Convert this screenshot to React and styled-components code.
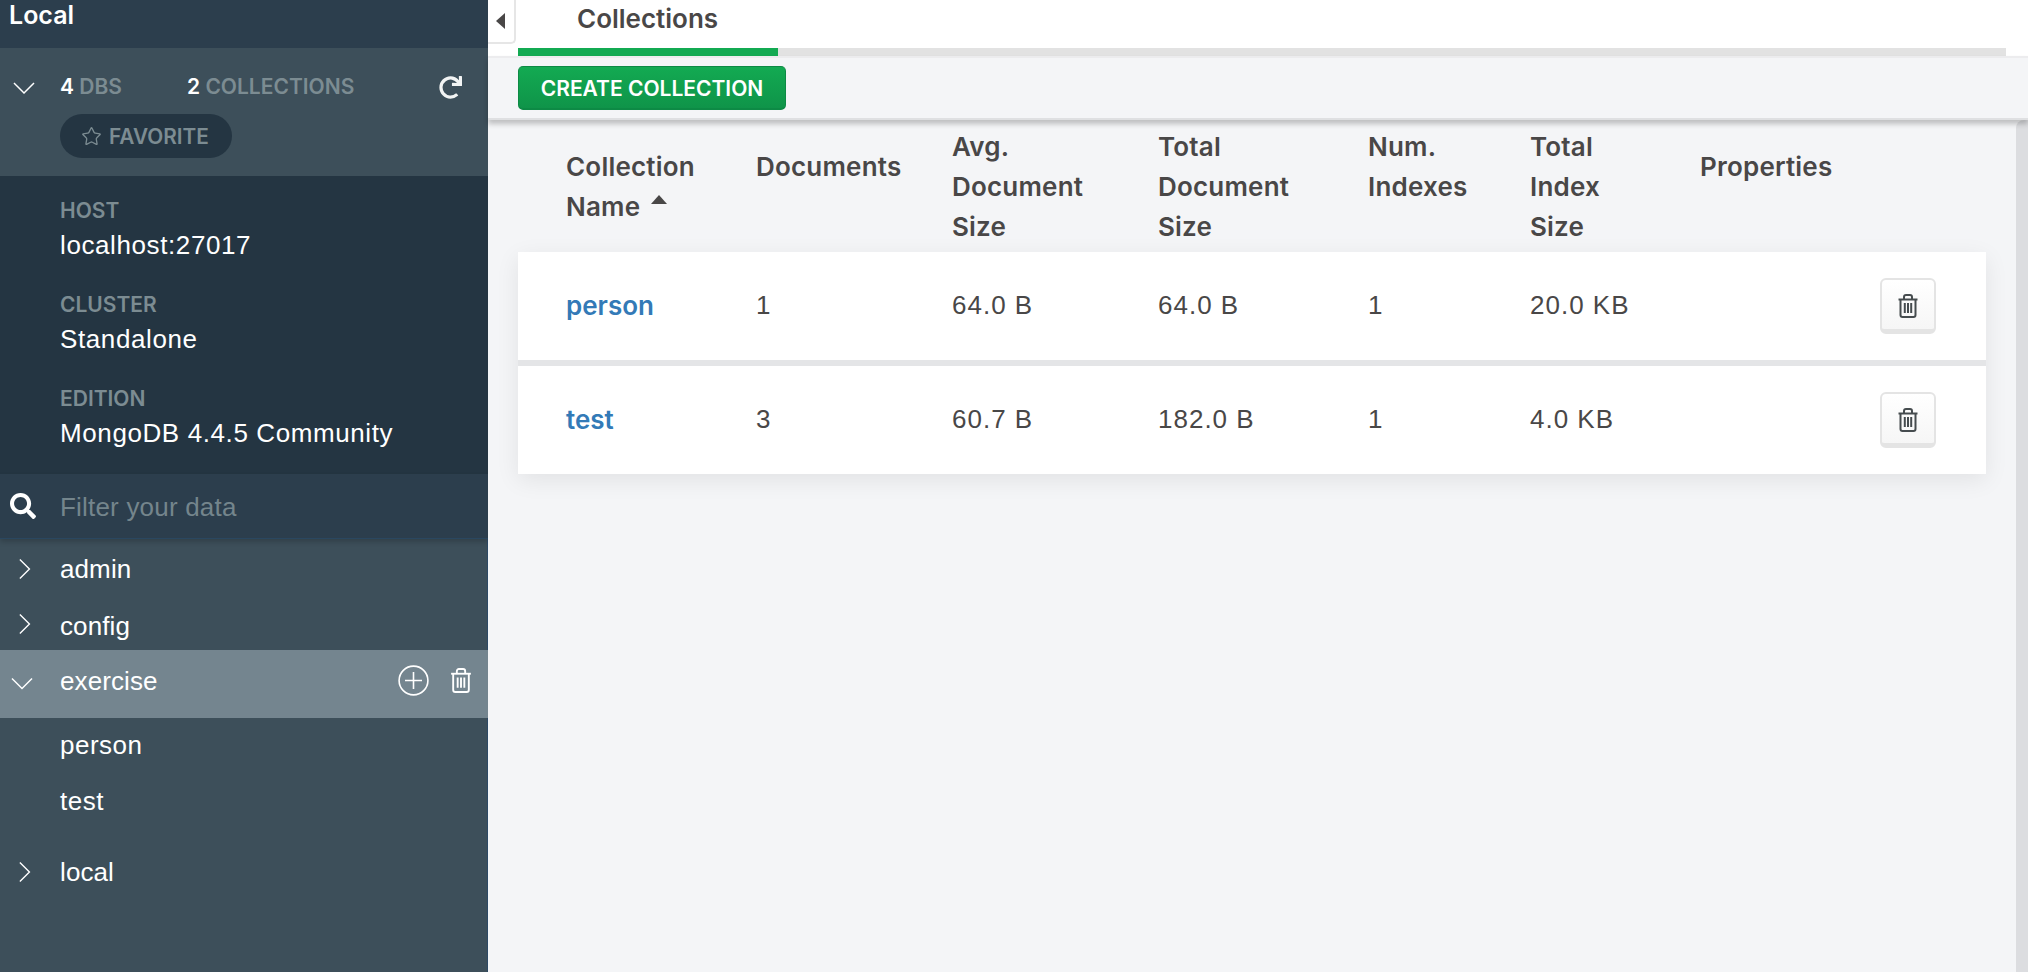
import React from "react";
import styled, { createGlobalStyle } from "styled-components";
import { FaRedo, FaSearch } from "react-icons/fa";
import { Star } from "lucide-react";

const medium = `font-family: Inter, "Liberation Sans", Arial, sans-serif; font-weight: 600;`;

const GlobalStyle = createGlobalStyle`
  html, body {
    margin: 0;
    height: 100%;
    overflow: hidden;
    background: #f4f5f7;
    font-family: "Liberation Sans", Arial, sans-serif;
    -webkit-font-smoothing: antialiased;
  }
  * { box-sizing: border-box; }
`;

const Page = styled.div`
  display: flex;
  height: 100vh;
  color: #494747;
`;

/* sidebar */
const Sidebar = styled.aside`
  width: 488px;
  flex: none;
  display: flex;
  flex-direction: column;
  overflow: hidden;
  color: #fff;
  background: #3d4f5a;
`;

const ConnectionName = styled.div`
  height: 48px;
  flex: none;
  padding: 1px 0 0 9px;
  font-size: 25px;
  line-height: 28px;
  ${medium}
  background: #2c3e4d;
`;

const Summary = styled.div`
  position: relative;
  height: 128px;
  flex: none;
  padding: 23px 0 0 60px;
  background: #3d4f5a;
`;

const Counts = styled.div`
  display: flex;
  font-size: 21px;
  line-height: 32px;
  ${medium}
`;

const Count = styled.div`
  width: ${({ width }) => width}px;
  flex: none;
  color: #fff;
  span {
    color: #7c8c92;
  }
`;

const SummaryChevron = styled.svg`
  position: absolute;
  left: 13px;
  top: 34px;
`;

const RefreshButton = styled.div`
  position: absolute;
  left: 439px;
  top: 28px;
  display: flex;
  color: #f2f4f4;
`;

const FavoriteButton = styled.div`
  display: inline-flex;
  align-items: center;
  gap: 7px;
  width: 172px;
  height: 44px;
  margin-top: 11px;
  padding-left: 21px;
  border-radius: 22px;
  font-size: 20.8px;
  ${medium}
  color: #7c8c92;
  background: #243542;
`;

const Instance = styled.div`
  height: 298px;
  flex: none;
  padding: 20px 0 0 60px;
  background: #243542;
`;

const InstanceItem = styled.div`
  margin-bottom: 26px;
`;

const InstanceLabel = styled.div`
  font-size: 21px;
  line-height: 30px;
  ${medium}
  color: #7c8c92;
`;

const InstanceValue = styled.div`
  font-size: 26px;
  line-height: 38px;
  letter-spacing: 0.6px;
  color: #fff;
`;

const Filter = styled.div`
  position: relative;
  z-index: 1;
  height: 65px;
  flex: none;
  display: flex;
  align-items: center;
  padding-left: 10px;
  background: #2c3e4d;
  border-bottom: 1px solid #2a4760;
  box-shadow: 0 3px 5px rgba(0, 0, 0, 0.18);
  svg {
    width: 26px;
    height: 26px;
    color: #fff;
    flex: none;
  }
`;

const FilterText = styled.div`
  margin-left: 24px;
  padding-top: 2px;
  font-size: 26px;
  letter-spacing: 0.2px;
  color: #74858c;
`;

const Tree = styled.div`
  flex: 1;
  padding-top: 2px;
  background: #3d4f5a;
  box-shadow: inset -1px 0 0 #2e4a66;
`;

const DbRow = styled.div`
  position: relative;
  display: flex;
  align-items: center;
  height: ${({ height }) => height}px;
  margin-top: ${({ gap }) => gap || 0}px;
  padding: ${({ pad }) => pad || "0"};
  padding-left: 60px;
  font-size: 26px;
  letter-spacing: 0.1px;
  color: #fff;
  background: ${({ active }) => (active ? "#74858f" : "transparent")};
`;

const ChildRow = styled.div`
  display: flex;
  align-items: center;
  height: 56px;
  padding: 0 0 2px 60px;
  font-size: 26px;
  letter-spacing: 0.5px;
  color: #fff;
`;

const RowChevron = styled.svg`
  position: absolute;
  left: ${({ left }) => left}px;
  top: 50%;
  transform: translateY(-50%);
`;

const RowActions = styled.div`
  margin-left: auto;
  display: flex;
  align-items: center;
  gap: 21px;
  padding: 0 16px 2px 0;
`;

/* main */
const Main = styled.main`
  position: relative;
  flex: 1;
  min-width: 0;
  display: flex;
  flex-direction: column;
  background: #f4f5f7;
`;

const CollapseTab = styled.div`
  position: absolute;
  left: 0;
  top: 0;
  width: 28px;
  height: 44px;
  display: flex;
  align-items: center;
  justify-content: center;
  padding-right: 2px;
  background: #fff;
  border-right: 2px solid #e6e6e6;
  border-bottom: 2px solid #e6e6e6;
  border-bottom-right-radius: 5px;
  &::before {
    content: "";
    border-top: 8px solid transparent;
    border-bottom: 8px solid transparent;
    border-right: 9px solid #494747;
  }
`;

const TabsHeader = styled.div`
  flex: none;
  padding: 0 22px 0 30px;
  background: #fff;
`;

const Tab = styled.div`
  height: 48px;
  padding: 4px 0 0 59px;
  font-size: 26px;
  line-height: 30px;
  ${medium}
  color: #494747;
`;

const TabTrack = styled.div`
  height: 8px;
  background: #e2e2e2;
`;

const TabMarker = styled.div`
  width: 260px;
  height: 100%;
  background: #13aa52;
`;

const Toolbar = styled.div`
  position: relative;
  z-index: 1;
  height: 64px;
  flex: none;
  padding: 10px 30px 0;
  background: #f4f5f7;
  border-top: 2px solid #ececee;
  border-bottom: 2px solid #dfe0e2;
  box-shadow: 0 4px 5px rgba(0, 0, 0, 0.22);
`;

const CreateButton = styled.div`
  width: 268px;
  height: 44px;
  margin-top: -2px;
  padding-top: 2px;
  display: flex;
  align-items: center;
  justify-content: center;
  border: 1px solid #0d8a45;
  border-bottom-width: 2px;
  border-radius: 5px;
  font-size: 21px;
  ${medium}
  color: #fff;
  background: linear-gradient(#13aa52, #0f9449);
`;

const Content = styled.div`
  flex: 1;
  display: flex;
  min-height: 0;
`;

const TableArea = styled.div`
  flex: 1;
  min-width: 0;
  padding: 7px 30px 0;
`;

const Scrollbar = styled.div`
  width: 12px;
  flex: none;
  background: #dcdde0;
  border-top-left-radius: 8px;
`;

const columns = "190px 196px 206px 210px 162px 170px 1fr";

const HeaderRow = styled.div`
  display: grid;
  grid-template-columns: ${columns};
  align-items: center;
  height: 120px;
  margin-bottom: 5px;
  padding-left: 48px;
  font-size: 26px;
  line-height: 40px;
  letter-spacing: 0.2px;
  ${medium}
  color: #494747;
`;

const HeaderCell = styled.div`
  align-self: ${({ top }) => (top ? "start" : "center")};
  padding-bottom: ${({ single }) => (single ? 40 : 0)}px;
`;

const SortCaret = styled.span`
  display: inline-block;
  margin-left: 11px;
  vertical-align: 12px;
  border-left: 8.5px solid transparent;
  border-right: 8.5px solid transparent;
  border-bottom: 9px solid #494747;
`;

const Rows = styled.div`
  display: flex;
  flex-direction: column;
  gap: 6px;
  background: #e4e5e7;
  box-shadow: 0 6px 22px rgba(0, 0, 0, 0.08);
`;

const TableRow = styled.div`
  display: grid;
  grid-template-columns: ${columns};
  align-items: center;
  height: 108px;
  padding: 0 50px 0 48px;
  font-size: 26px;
  color: #494747;
  background: #fff;
`;

const Cell = styled.div`
  padding-bottom: 2px;
  letter-spacing: 1px;
`;

const CollectionLink = styled.div`
  padding-bottom: 2px;
  ${medium}
  color: #337ab7;
`;

const DropButton = styled.div`
  justify-self: end;
  width: 56px;
  height: 56px;
  padding-top: 2px;
  display: flex;
  align-items: center;
  justify-content: center;
  border: 2px solid #e4e4e4;
  border-bottom-width: 5px;
  border-radius: 6px;
  background: linear-gradient(#fff, #f6f6f6);
`;

const Chevron = ({ as: Wrap = "svg", direction, size, ...rest }) => {
  const down = direction === "down";
  return (
    <Wrap
      width={down ? size : size * 0.58}
      height={down ? size * 0.58 : size}
      viewBox={down ? "0 0 24 14" : "0 0 14 24"}
      fill="none"
      stroke="#fff"
      strokeWidth="1.6"
      {...rest}
    >
      <path d={down ? "M1 1l11 11L23 1" : "M1 1l11 11L1 23"} />
    </Wrap>
  );
};

const TrashIcon = ({ color, width, height, stroke }) => (
  <svg width={width} height={height} viewBox="0 0 20 24" fill="none" stroke={color} strokeWidth={stroke}>
    <path d="M0.5 5.5h19" />
    <path d="M6 5.5V3a2 2 0 0 1 2-2h4a2 2 0 0 1 2 2v2.5" />
    <path d="M2.5 5.5V21a2 2 0 0 0 2 2h11a2 2 0 0 0 2-2V5.5" />
    <path d="M6.8 9v10M10 9v10M13.2 9v10" />
  </svg>
);

const PlusCircle = () => (
  <svg width="31" height="31" viewBox="0 0 31 31" fill="none" stroke="#fff" strokeWidth="1.6">
    <circle cx="15.5" cy="15.5" r="14.4" />
    <path d="M15.5 7v17M7 15.5h17" />
  </svg>
);

const instanceItems = [
  ["HOST", "localhost:27017"],
  ["CLUSTER", "Standalone"],
  ["EDITION", "MongoDB 4.4.5 Community"],
];

const collections = [
  { name: "person", docs: "1", avg: "64.0 B", total: "64.0 B", indexes: "1", indexSize: "20.0 KB" },
  { name: "test", docs: "3", avg: "60.7 B", total: "182.0 B", indexes: "1", indexSize: "4.0 KB" },
];

export default function App() {
  return (
    <Page>
      <GlobalStyle />
      <Sidebar>
        <ConnectionName>Local</ConnectionName>
        <Summary>
          <Chevron as={SummaryChevron} direction="down" size={22} />
          <Counts>
            <Count width={127}>4 <span>DBS</span></Count>
            <Count width={200}>2 <span>COLLECTIONS</span></Count>
          </Counts>
          <RefreshButton>
            <FaRedo size={23} />
          </RefreshButton>
          <FavoriteButton>
            <Star size={21} strokeWidth={1.5} />
            FAVORITE
          </FavoriteButton>
        </Summary>
        <Instance>
          {instanceItems.map(([label, value]) => (
            <InstanceItem key={label}>
              <InstanceLabel>{label}</InstanceLabel>
              <InstanceValue>{value}</InstanceValue>
            </InstanceItem>
          ))}
        </Instance>
        <Filter>
          <FaSearch />
          <FilterText>Filter your data</FilterText>
        </Filter>
        <Tree>
          <DbRow height={56}>
            <Chevron as={RowChevron} left={19} direction="right" size={21} />
            admin
          </DbRow>
          <DbRow height={53} pad="5px 0 0">
            <Chevron as={RowChevron} left={19} direction="right" size={21} />
            config
          </DbRow>
          <DbRow height={68} pad="0 0 6px" active>
            <Chevron as={RowChevron} left={11} direction="down" size={22} />
            exercise
            <RowActions>
              <PlusCircle />
              <TrashIcon color="#fff" width={22} height={25} stroke={1.8} />
            </RowActions>
          </DbRow>
          <ChildRow>person</ChildRow>
          <ChildRow>test</ChildRow>
          <DbRow height={56} gap={14}>
            <Chevron as={RowChevron} left={19} direction="right" size={21} />
            local
          </DbRow>
        </Tree>
      </Sidebar>
      <Main>
        <CollapseTab />
        <TabsHeader>
          <Tab>Collections</Tab>
          <TabTrack>
            <TabMarker />
          </TabTrack>
        </TabsHeader>
        <Toolbar>
          <CreateButton>CREATE COLLECTION</CreateButton>
        </Toolbar>
        <Content>
          <TableArea>
            <HeaderRow>
              <HeaderCell>Collection<br />Name<SortCaret /></HeaderCell>
              <HeaderCell single>Documents</HeaderCell>
              <HeaderCell>Avg.<br />Document<br />Size</HeaderCell>
              <HeaderCell>Total<br />Document<br />Size</HeaderCell>
              <HeaderCell top>Num.<br />Indexes</HeaderCell>
              <HeaderCell>Total<br />Index<br />Size</HeaderCell>
              <HeaderCell single>Properties</HeaderCell>
            </HeaderRow>
            <Rows>
              {collections.map((c) => (
                <TableRow key={c.name}>
                  <CollectionLink>{c.name}</CollectionLink>
                  <Cell>{c.docs}</Cell>
                  <Cell>{c.avg}</Cell>
                  <Cell>{c.total}</Cell>
                  <Cell>{c.indexes}</Cell>
                  <Cell>{c.indexSize}</Cell>
                  <DropButton>
                    <TrashIcon color="#464c4f" width={20} height={24} stroke={2} />
                  </DropButton>
                </TableRow>
              ))}
            </Rows>
          </TableArea>
          <Scrollbar />
        </Content>
      </Main>
    </Page>
  );
}
